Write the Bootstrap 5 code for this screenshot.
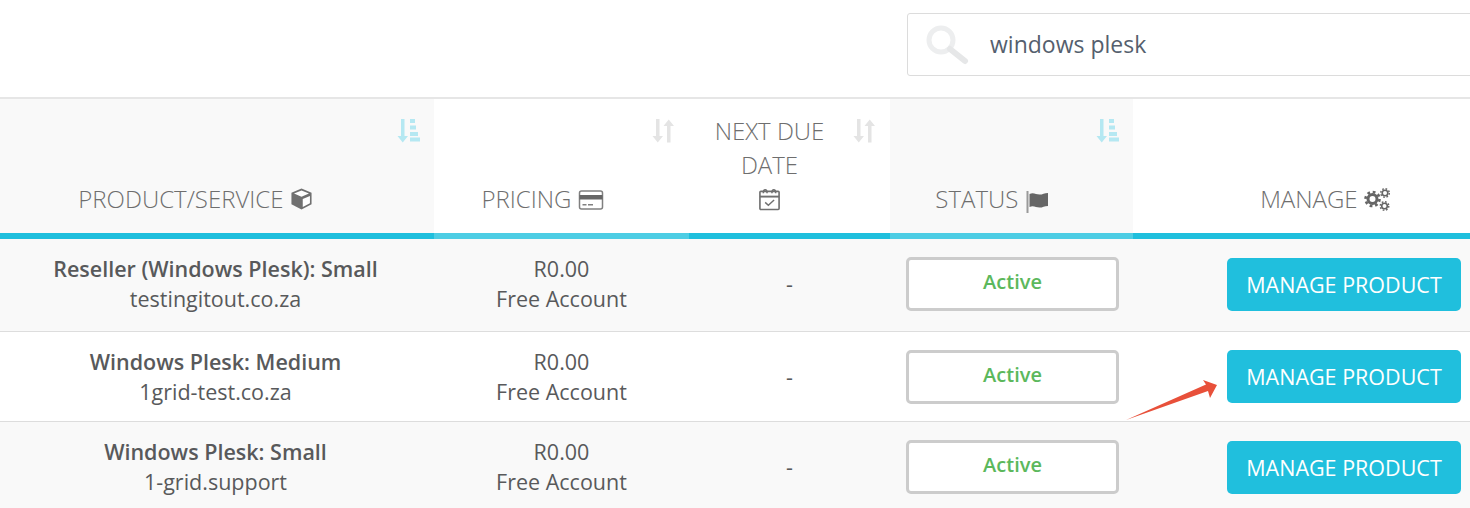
<!DOCTYPE html>
<html lang="en">
<head>
<meta charset="utf-8">
<title>Products</title>
<link href="https://cdn.jsdelivr.net/npm/bootstrap@5.3.0/dist/css/bootstrap.min.css" rel="stylesheet">
<style>
html,body{height:508px;overflow:hidden;background:#fff}
body{font-family:"Open Sans","Noto Sans",sans-serif;color:#58595b;position:relative;width:1470px}
.searchrow{height:97px;padding:13px 0 0 907px;overflow:hidden}
.searchbox{width:600px;height:63px;border:1px solid #dcdcdc;border-radius:3px;padding-left:17px;gap:19px;font-size:23px;color:#555f6e}
.svc-table{table-layout:fixed;width:1470px;margin:0;border-top:2px solid #e6e6e6;border-collapse:separate;border-spacing:0;--bs-table-bg:transparent}
.svc-table th{position:relative;height:140px;padding:15px 48px 17px 10px;font-weight:300;font-size:24px;line-height:34px;color:#6e6e6e;text-align:center;vertical-align:bottom;border-bottom:6px solid #1fbfdd;background:#fff}
.svc-table th.sorted{background:#f9f9f9}
.svc-table th.edge{border-bottom-color:#4dcde4}
.svc-table th.namehead{padding-right:53px}
.svc-table th.wrapcell{padding-left:14px;padding-right:54px}
.svc-table th.mcol{padding-left:48px;padding-right:0}
.sortmark{position:absolute;top:19px;right:14px;width:24px;height:26px}
.headglyph{display:inline-block;vertical-align:-3px}
.headglyph.flagmark{vertical-align:-6px;margin-left:1px}
.svc-table td{height:90px;padding:0;font-size:21.5px;line-height:30px;color:#58595b;text-align:center;vertical-align:middle;border-bottom:1px solid #ddd;background:#fff}
.svc-table td.namecell{padding-right:3px}
.svc-table tr.firstrow td{height:93px;padding-bottom:2px}
.svc-table tr.zebra td{background:#f9f9f9}
.svc-table tr:last-child td{border-bottom:0}
.prodname{font-weight:600}
.statbox{width:213px;height:54px;margin-left:16px;border:3px solid #ccc;border-radius:5px;background:#fff;color:#5cb85c;font-weight:600;font-size:20px;padding-bottom:4px}
.btn.mng{width:234px;height:53px;margin-left:94px;padding:2px 0 0;display:flex;align-items:center;justify-content:center;background:#20bfdd;border:0;border-radius:5px;color:#fff;font-size:21.500px}
.pointer{position:absolute;left:1120px;top:375px;width:105px;height:50px}
</style>
</head>
<body>
<div class="searchrow">
  <div class="searchbox d-flex align-items-center">
    <svg width="46" height="40" viewBox="0 0 46 40" fill="none" stroke="#edeeef"><circle cx="16" cy="15" r="12" stroke-width="5"/><path d="M25 24l15 12" stroke-width="6" stroke-linecap="round" stroke="#e6e7e8"/></svg>
    <span>windows plesk</span>
  </div>
</div>
<table class="table svc-table">
  <colgroup><col style="width:434px"><col style="width:255px"><col style="width:201px"><col style="width:243px"><col style="width:337px"></colgroup>
  <thead>
    <tr>
      <th class="sorted namehead">
        <svg class="sortmark" viewBox="0 0 24 26" fill="#b5e8f2"><path d="M5 1h3.500v17h3.500l-5.250 6.500-5.250-6.500h3.500zM14 1h5v4h-5zM14 7.500h6v4h-6zM14 14h8v4h-8zM14 19.500h10v4H14z"/></svg>
        PRODUCT/SERVICE
        <svg class="headglyph" width="23" height="24" viewBox="0 0 24 24"><path d="M12 1l10.500 4.500v12L12 23 1.500 17.500v-12z" fill="#707070"/><path d="M12 3l7.800 3.300-7.800 3.400-7.800-3.400z" fill="#fff"/><path d="M13.300 12l7.500-3.200v7.700l-7.500 3.900z" fill="#fff"/></svg>
      </th>
      <th class="edge">
        <svg class="sortmark" viewBox="0 0 24 26" fill="#e4e4e4"><path d="M5 1h3.500v17h3.500l-5.250 6.500-5.250-6.500h3.500zM16 24.500V8h-3.500L17.750 1.500 23 8h-3.500v16.500z"/></svg>
        PRICING
        <svg class="headglyph" width="26" height="22" viewBox="0 0 26 22"><rect x="1.500" y="2" width="23" height="18" rx="2" fill="none" stroke="#808080" stroke-width="1.500"/><rect x="1.500" y="6" width="23" height="4.500" fill="#666"/><rect x="4.500" y="15" width="4" height="1.500" fill="#808080"/><rect x="10" y="15" width="5" height="1.500" fill="#808080"/></svg>
      </th>
      <th class="wrapcell">
        <svg class="sortmark" viewBox="0 0 24 26" fill="#e4e4e4"><path d="M5 1h3.500v17h3.500l-5.250 6.500-5.250-6.500h3.500zM16 24.500V8h-3.500L17.750 1.500 23 8h-3.500v16.500z"/></svg>
        NEXT DUE DATE<br>
        <svg class="headglyph" width="23" height="24" viewBox="0 0 24 24" fill="none" stroke="#707070" stroke-width="1.700"><rect x="2" y="4" width="20" height="19" rx="1"/><path d="M2 9.500h20" stroke-width="2"/><path d="M5.500 6c0-5 4-5 4 0M14.500 6c0-5 4-5 4 0" stroke-width="1.600"/><path d="M7.500 15.500l3.300 3 6-5.500" stroke-width="1.500"/></svg>
      </th>
      <th class="sorted edge">
        <svg class="sortmark" viewBox="0 0 24 26" fill="#b5e8f2"><path d="M5 1h3.500v17h3.500l-5.250 6.500-5.250-6.500h3.500zM14 1h5v4h-5zM14 7.500h6v4h-6zM14 14h8v4h-8zM14 19.500h10v4H14z"/></svg>
        STATUS
        <svg class="headglyph flagmark" width="24" height="24" viewBox="0 0 24 24"><rect x="0.500" y="1" width="2" height="22" fill="#9a9a9a"/><path d="M3.500 4c4-1.800 6.500.6 10 .6 3 0 5-1.400 8.500-1.600v13c-3.500.2-5.500 1.600-8.500 1.600-3.500 0-6-2.400-10-.6z" fill="#666"/></svg>
      </th>
      <th class="mcol">
        MANAGE
        <svg class="headglyph" width="27" height="24" viewBox="0 0 27 24" fill="none" stroke="#666"><circle cx="8.500" cy="12" r="4.500" stroke-width="3"/><circle cx="8.500" cy="12" r="7" stroke-width="2.600" stroke-dasharray="2.750 2.750"/><circle cx="21" cy="6" r="2.800" stroke-width="1.600"/><circle cx="21" cy="6" r="4.300" stroke-width="1.400" stroke-dasharray="1.700 1.680"/><circle cx="20.500" cy="19" r="2.800" stroke-width="1.600"/><circle cx="20.500" cy="19" r="4.300" stroke-width="1.400" stroke-dasharray="1.700 1.680"/></svg>
      </th>
    </tr>
  </thead>
  <tbody>
    <tr class="zebra firstrow">
      <td class="namecell"><span class="prodname">Reseller (Windows Plesk): Small</span><br>testingitout.co.za</td>
      <td>R0.00<br>Free Account</td>
      <td>-</td>
      <td><div class="statbox d-flex align-items-center justify-content-center">Active</div></td>
      <td><button type="button" class="btn mng">MANAGE PRODUCT</button></td>
    </tr>
    <tr>
      <td class="namecell"><span class="prodname">Windows Plesk: Medium</span><br>1grid-test.co.za</td>
      <td>R0.00<br>Free Account</td>
      <td>-</td>
      <td><div class="statbox d-flex align-items-center justify-content-center">Active</div></td>
      <td><button type="button" class="btn mng">MANAGE PRODUCT</button></td>
    </tr>
    <tr class="zebra">
      <td class="namecell"><span class="prodname">Windows Plesk: Small</span><br>1-grid.support</td>
      <td>R0.00<br>Free Account</td>
      <td>-</td>
      <td><div class="statbox d-flex align-items-center justify-content-center">Active</div></td>
      <td><button type="button" class="btn mng">MANAGE PRODUCT</button></td>
    </tr>
  </tbody>
</table>
<svg class="pointer" viewBox="0 0 105 50"><polygon points="6,45 86,9.500 83,5 97,10 90,23 88,16" fill="#e8503a"/></svg>
<script src="https://cdn.jsdelivr.net/npm/bootstrap@5.3.0/dist/js/bootstrap.bundle.min.js"></script>
</body>
</html>
